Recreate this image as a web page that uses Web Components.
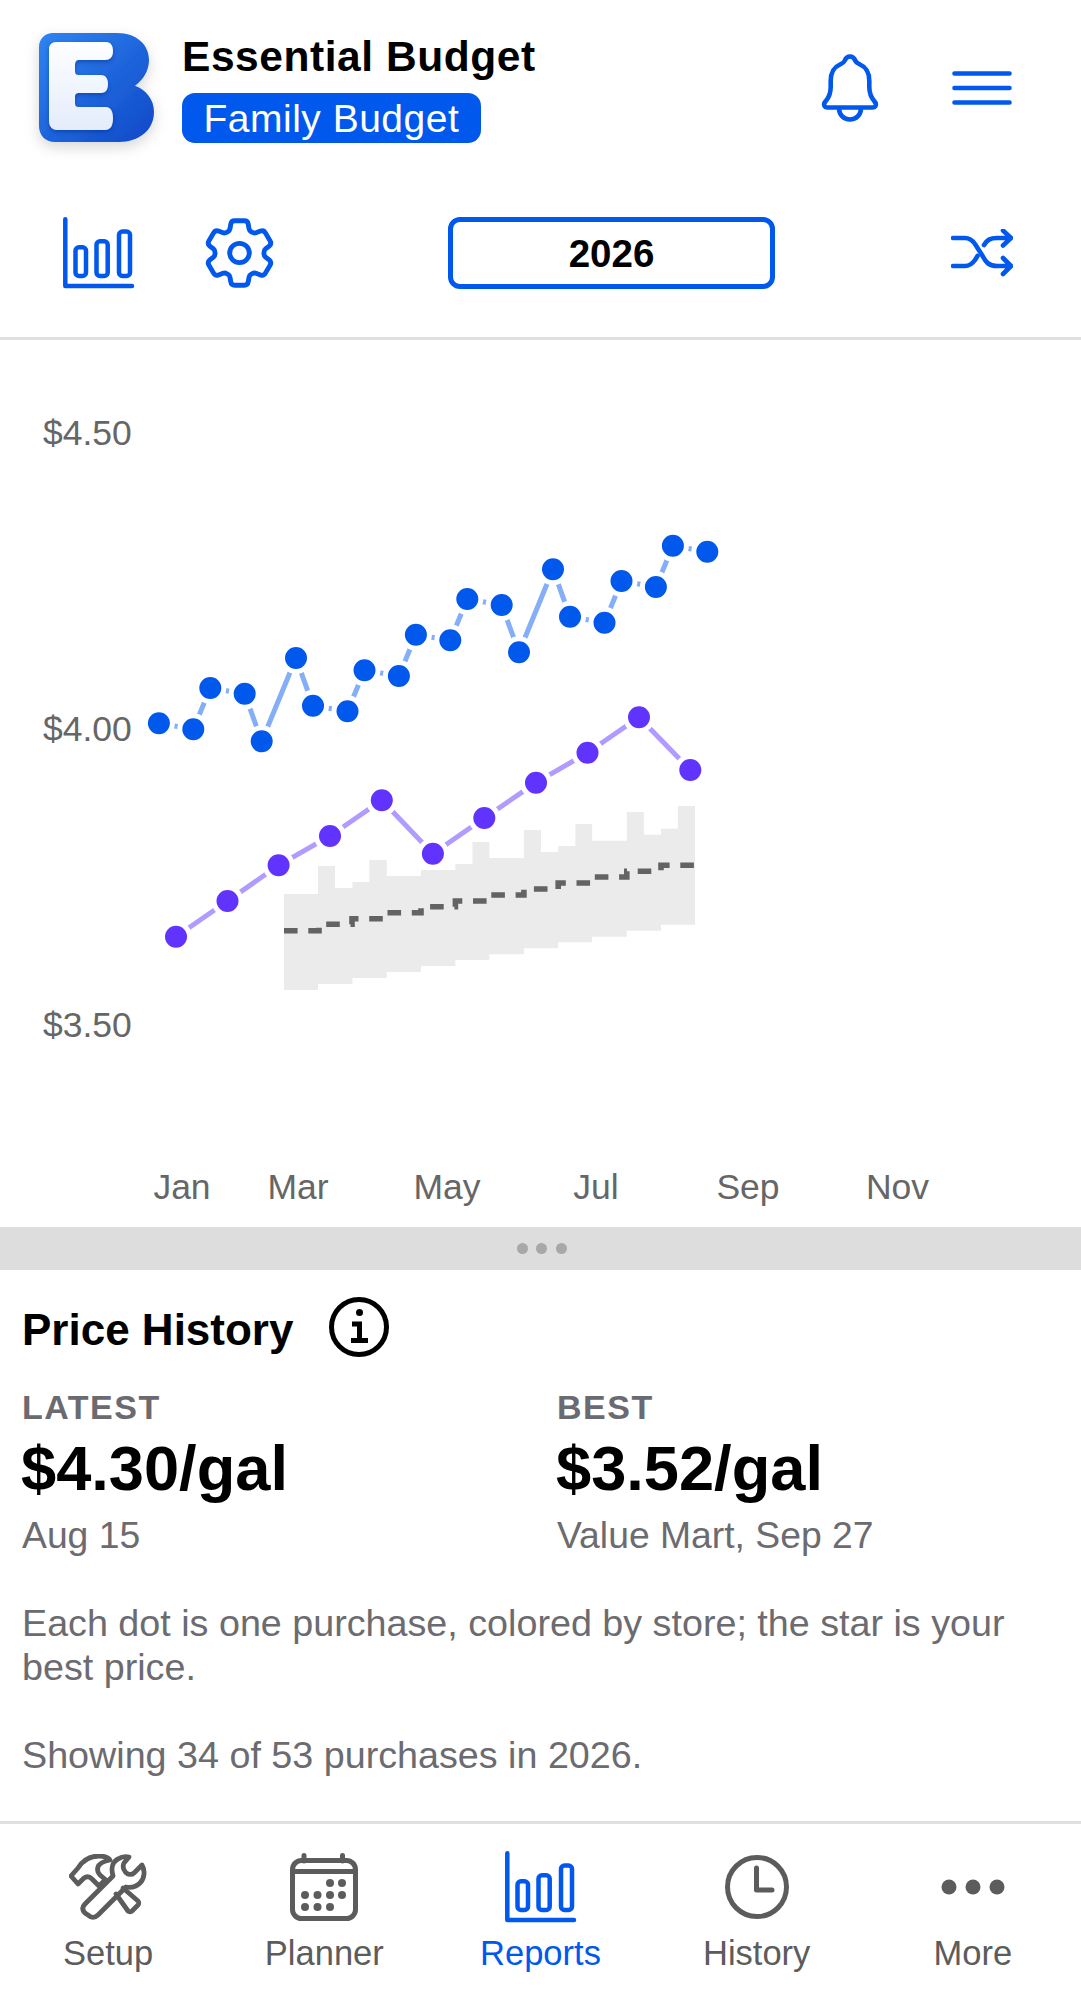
<!DOCTYPE html>
<html lang="en">
<head>
<meta charset="utf-8">
<title>Essential Budget</title>
<style>
  html, body { margin: 0; background: #fff; }
  body { font-family: "Liberation Sans", Arial, sans-serif; width: 1081px; height: 1999px; overflow: hidden; }
</style>
</head>
<body>
<eb-app></eb-app>
<script>
const BLUE = '#0058ec';
const GREY = '#5c5c5c';

const ICONS = {
  logo: `<svg width="150" height="145" viewBox="-17 -15 150 145" style="display:block">
      <defs>
        <linearGradient id="lb" x1="0" y1="0" x2="1" y2="1"><stop offset="0" stop-color="#2f84f2"/><stop offset="1" stop-color="#0f47c6"/></linearGradient>
        <linearGradient id="lw" x1="0" y1="0" x2="0" y2="1"><stop offset="0" stop-color="#fdfeff"/><stop offset="1" stop-color="#e4ecfb"/></linearGradient>
        <filter id="ls" x="-30%" y="-30%" width="160%" height="160%"><feDropShadow dx="0" dy="5" stdDeviation="7" flood-color="#000" flood-opacity=".16"/></filter>
        <filter id="le" x="-20%" y="-20%" width="140%" height="140%"><feDropShadow dx="0" dy="2" stdDeviation="2" flood-color="#06308f" flood-opacity=".55"/></filter>
      </defs>
      <path filter="url(#ls)" fill="url(#lb)" d="M14 0H78C98 0 110 12 110 27C110 38 104 47 96 52.7C107 57 115 66 115 79C115 97 100 109 80 109H16C6 109 0 102 0 93V14C0 6 6 0 14 0Z"/>
      <path filter="url(#le)" fill="url(#lw)" d="M17 9H67C72 9 74 13 74 18C74 24 71 27 66 27H40C37 27 36 29 36 32V38C36 41 37 42 40 42H62C67 42 69 46 69 51C69 56 67 60 62 60H40C37 60 36 61 36 64V70C36 73 37 74 40 74H67C72 74 74 79 74 85C74 92 72 97 66 97H18C13 97 10 93 10 88V16C10 12 13 9 17 9Z"/>
    </svg>`,
  bell: `<svg width="58" height="68" viewBox="0 0 58 68" fill="none" stroke="${BLUE}" stroke-width="4.600" style="display:block">
      <path stroke-linejoin="round" d="M29 2.500C26 2.500 24.500 4.500 23.500 7C22.800 8.700 21 9.500 19 10.500C13 13 9.700 19 9.700 27V33C9.700 40 7.500 44 4.500 47.500C2 50 3 53.500 7 53.500H51C55 53.500 56 50 53.500 47.500C50.500 44 48.300 40 48.300 33V27C48.300 19 45 13 39 10.500C37 9.500 35.200 8.700 34.500 7C33.500 4.500 32 2.500 29 2.500Z"/>
      <path d="M18 54C18 61 23 65.500 29 65.500S40 61 40 54"/>
    </svg>`,
  menu: `<svg width="60" height="40" viewBox="0 0 60 40" fill="none" stroke="${BLUE}" stroke-width="4.600" stroke-linecap="round" style="display:block">
      <path d="M2.500 5.500H57.500M2.500 20H57.500M2.500 34.500H57.500"/>
    </svg>`,
  bars: `<svg width="72" height="72" viewBox="0 0 72 72" fill="none" stroke="currentColor" stroke-width="4.500" stroke-linecap="round" stroke-linejoin="round" style="display:block">
      <path d="M2.300 2.300V69H69"/>
      <rect x="12.500" y="30.200" width="10.500" height="28.800" rx="3.500"/>
      <rect x="33.500" y="24.200" width="11.200" height="34.800" rx="3.500"/>
      <rect x="56" y="14.500" width="11" height="44.500" rx="3.500"/>
    </svg>`,
  gear: `<svg width="87" height="86" viewBox="0 0 24 24" preserveAspectRatio="none" fill="none" stroke="${BLUE}" stroke-width="1.350" stroke-linejoin="round" style="display:block">
      <path d="M9.594 3.94c.09-.542.56-.94 1.11-.94h2.593c.55 0 1.02.398 1.11.94l.213 1.281c.063.374.313.686.645.87.074.04.147.083.22.127.325.196.72.257 1.075.124l1.217-.456a1.125 1.125 0 0 1 1.37.49l1.296 2.247a1.125 1.125 0 0 1-.26 1.431l-1.003.827c-.293.241-.438.613-.43.992a7.723 7.723 0 0 1 0 .255c-.008.378.137.75.43.991l1.004.827c.424.35.534.955.26 1.43l-1.298 2.247a1.125 1.125 0 0 1-1.369.491l-1.217-.456c-.355-.133-.75-.072-1.076.124a6.47 6.47 0 0 1-.22.128c-.331.183-.581.495-.644.869l-.213 1.281c-.09.543-.56.94-1.11.94h-2.594c-.55 0-1.019-.398-1.11-.94l-.213-1.281c-.062-.374-.312-.686-.644-.87a6.52 6.52 0 0 1-.22-.127c-.325-.196-.72-.257-1.076-.124l-1.217.456a1.125 1.125 0 0 1-1.369-.49l-1.297-2.247a1.125 1.125 0 0 1 .26-1.431l1.004-.827c.292-.24.437-.613.43-.991a6.932 6.932 0 0 1 0-.255c.007-.38-.138-.751-.43-.992l-1.004-.827a1.125 1.125 0 0 1-.26-1.43l1.297-2.247a1.125 1.125 0 0 1 1.37-.491l1.216.456c.356.133.751.072 1.076-.124.072-.044.146-.086.22-.128.332-.183.582-.495.644-.869l.214-1.28Z"/>
      <path d="M14.700 12a2.700 2.700 0 1 1-5.400 0 2.700 2.700 0 0 1 5.400 0Z"/>
    </svg>`,
  shuffle: `<svg width="62" height="48" viewBox="0 0 62 48" fill="none" stroke="${BLUE}" stroke-width="4.600" stroke-linecap="round" stroke-linejoin="round" style="display:block">
      <path d="M2 9H14C19 9 21.500 11.500 24 15L31 26C34 31 36 37 46 37H60M52 29L60 37L52 45"/>
      <path d="M2 37H14C19 37 21.500 34.500 24 31L26.500 27M33 16C36 11 39 9 46 9H60M52 1.500L60 9L52 16.500"/>
    </svg>`,
  info: `<svg width="60" height="60" viewBox="0 0 60 60" fill="none" stroke="#000" stroke-width="5" style="display:block">
      <circle cx="30" cy="30" r="27.500"/>
      <path d="M23 27H30.500V43M22 43.500H39"/>
      <circle cx="30.500" cy="15.500" r="3.500" fill="#000" stroke="none"/>
    </svg>`,
  tools: `<svg width="78" height="66" viewBox="0 0 78 66" fill="none" stroke="${GREY}" stroke-width="4.800" stroke-linejoin="round" stroke-linecap="round" style="display:block">
      <path d="M16 50L44 22C42 15 43 8 49 5C52 3 56 2 60 3L55 9C53 13 55 18 59 20C62 21 64 20 65 19L73 11C76 16 76 24 71 29C67 33 62 34 57 33L29 61C26 64 22 64 19 61L16 59C13 56 13 53 16 50Z"/>
      <path d="M47 40L59 57C60 58 62 58 63 57L69 51C70 50 70 48 69 47L54 34"/>
      <path d="M38 27L31 21C29 19 28 16 29 13C30 9 36 7 41 6C39 3 35 2 30 2C22 2 14 6 9 14L2 22L9 30L15 24C18 22 21 23 23 25L30 32L34 28"/>
    </svg>`,
  calendar: `<svg width="68" height="68" viewBox="0 0 68 68" fill="none" stroke="${GREY}" stroke-width="5" stroke-linecap="round" style="display:block">
      <rect x="2.500" y="7.500" width="63" height="58" rx="9"/>
      <path d="M14 2.500V8M52.500 2.500V8M2.500 18.500H65.500"/>
      <g fill="${GREY}" stroke="none">
        <circle cx="40" cy="30" r="4"/><circle cx="52" cy="30" r="4"/>
        <circle cx="15" cy="42" r="4"/><circle cx="27.500" cy="42" r="4"/><circle cx="40" cy="42" r="4"/><circle cx="52" cy="42" r="4"/>
        <circle cx="15" cy="54" r="4"/><circle cx="27.500" cy="54" r="4"/><circle cx="40" cy="54" r="4"/>
      </g>
    </svg>`,
  clock: `<svg width="64" height="64" viewBox="0 0 64 64" fill="none" stroke="${GREY}" stroke-width="5" stroke-linecap="round" stroke-linejoin="round" style="display:block">
      <circle cx="32" cy="32" r="29.500"/>
      <path d="M31.500 13V35H47"/>
    </svg>`,
  dots: `<svg width="64" height="16" viewBox="0 0 64 16" fill="${GREY}" style="display:block">
      <circle cx="8" cy="8" r="7.500"/><circle cx="32" cy="8" r="7.500"/><circle cx="56" cy="8" r="7.500"/>
    </svg>`
};

class EbIcon extends HTMLElement {
  constructor() {
    super();
    this.attachShadow({mode: 'open'});
  }
  connectedCallback() {
    this.shadowRoot.innerHTML = `<style>:host{display:block;line-height:0}</style>${ICONS[this.getAttribute('name')]}`;
  }
}
customElements.define('eb-icon', EbIcon);

class EbHeader extends HTMLElement {
  constructor() {
    super();
    this.attachShadow({mode: 'open'});
    this.shadowRoot.innerHTML = `
      <style>
        :host { display: flex; height: 166px; box-sizing: border-box; align-items: flex-start; }
        .logo { margin: 18px 0 0 22px; }
        .names { margin: 31px 0 0 10px; flex: 1; }
        h1 { margin: 0; font-size: 42.500px; line-height: 52px; font-weight: 700; color: #000; letter-spacing: .55px; }
        .badge { display: inline-block; margin-top: 10px; background: ${BLUE}; color: #fff; border-radius: 13px; font-size: 39px; line-height: 49px; padding: 1px 21.500px 0; letter-spacing: .5px; }
        .bell { margin: 54px 73px 0 0; }
        .menu { margin: 68px 69.500px 0 0; }
      </style>
      <eb-icon class="logo" name="logo"></eb-icon>
      <div class="names">
        <h1>Essential Budget</h1>
        <div class="badge">Family Budget</div>
      </div>
      <eb-icon class="bell" name="bell"></eb-icon>
      <eb-icon class="menu" name="menu"></eb-icon>`;
  }
}
customElements.define('eb-header', EbHeader);

class EbToolbar extends HTMLElement {
  constructor() {
    super();
    this.attachShadow({mode: 'open'});
    this.shadowRoot.innerHTML = `
      <style>
        :host { display: flex; height: 174px; box-sizing: border-box; border-bottom: 3px solid #e0e0e0; padding: 51px 68px 0 63px; align-items: flex-start; color: ${BLUE}; }
        .gear { margin: -7px 0 0 61px; }
        .year { box-sizing: border-box; width: 327px; height: 72px; margin-left: 165px; padding-top: 2px; border: 5px solid ${BLUE}; border-radius: 12px; color: #000; font-size: 38.500px; font-weight: 700; display: flex; align-items: center; justify-content: center; }
        .shuffle { margin: 12px 0 0 auto; }
      </style>
      <eb-icon name="bars"></eb-icon>
      <eb-icon class="gear" name="gear"></eb-icon>
      <div class="year">2026</div>
      <eb-icon class="shuffle" name="shuffle"></eb-icon>`;
  }
}
customElements.define('eb-toolbar', EbToolbar);

const BLUE_PTS = [[158.9,723.3],[193.3,729.3],[210.3,688],[244.7,693.7],[261.7,741.3],[296,658],[313,705.7],[347.5,711.3],[364.5,670.3],[398.9,676],[415.9,634.7],[450.3,640.3],[467.3,599],[501.7,605],[519,652.3],[553,569.3],[570,616.7],[604.5,622.7],[621.5,581],[655.9,587],[672.9,545.7],[707.3,551.7]];
const PURPLE_PTS = [[176,936.7],[227.5,901],[278.6,865.3],[330,836],[381.8,800.3],[432.9,853.7],[484.3,818],[536,782.7],[587.5,752.7],[639,717.3],[690.3,770]];
// band edges are half month steps
const BAND_TOP = [[284,894],[318,866],[335,888],[352.5,882],[369.3,860],[386.8,876],[421,870],[455.4,864],[472.5,842],[489.3,858],[523.9,830],[541,852],[558.2,846],[575.4,824],[592.1,840.7],[626.8,812],[643.9,834.7],[661,828.7],[677.9,806]];
const BAND_BOTTOM = [[284,990],[318,984],[352.5,978],[386.8,972],[421,966],[455.4,960],[489.3,954.3],[523.9,948.3],[558.2,942.3],[592.1,936.7],[626.8,930.7],[661,924.7]];
const MEDIAN = [[284,930.7],[319,924.3],[352,918.7],[386.8,912.7],[421,906.7],[455.4,901],[489.3,895],[523.9,889],[558.2,883],[592.1,877],[626.8,871.3],[661,865.3]];
const RIGHT = 695;

class EbChart extends HTMLElement {
  constructor() {
    super();
    this.attachShadow({mode: 'open'});
  }
  series(pts, line, dot) {
    const d = pts.map((p, i) => (i ? 'L' : 'M') + p[0] + ' ' + p[1]).join('');
    const dots = pts.map(p => `<circle cx="${p[0]}" cy="${p[1]}" r="13.5" fill="${dot}" stroke="#fff" stroke-width="5"/>`).join('');
    return `<path d="${d}" fill="none" stroke="${line}" stroke-width="5"/>${dots}`;
  }
  connectedCallback() {
    let band = '';
    BAND_TOP.forEach((p, i) => { band += `${i ? 'V' + p[1] : 'M' + p[0] + ' ' + p[1]}H${(BAND_TOP[i + 1] || [RIGHT])[0]}`; });
    BAND_BOTTOM.slice().reverse().forEach(p => { band += `V${p[1]}H${p[0]}`; });
    band += 'Z';
    let med = '';
    MEDIAN.forEach((p, i) => { med += `${i ? 'V' + p[1] : 'M' + p[0] + ' ' + p[1]}H${(MEDIAN[i + 1] || [RIGHT])[0]}`; });
    const yLabels = [['$4.50', 444.5], ['$4.00', 740.5], ['$3.50', 1036.5]];
    const xLabels = [['Jan', 182], ['Mar', 298], ['May', 447], ['Jul', 596], ['Sep', 748], ['Nov', 897.5]];
    this.shadowRoot.innerHTML = `
      <style>
        :host { display: block; height: 887px; }
        svg { display: block; }
        text { font-family: "Liberation Sans", Arial, sans-serif; font-size: 35.500px; fill: #666; }
      </style>
      <svg width="1081" height="887" viewBox="0 340 1081 887">
        <path d="${band}" fill="#ebebeb"/>
        <path d="${med}" fill="none" stroke="#636366" stroke-width="5.600" stroke-dasharray="13.600 10.700"/>
        ${this.series(BLUE_PTS, '#85aef8', BLUE)}
        ${this.series(PURPLE_PTS, '#b29bff', '#6133ff')}
        ${yLabels.map(l => `<text x="43" y="${l[1]}">${l[0]}</text>`).join('')}
        ${xLabels.map(l => `<text x="${l[1]}" y="1198.500" text-anchor="middle">${l[0]}</text>`).join('')}
      </svg>`;
  }
}
customElements.define('eb-chart', EbChart);

class EbHandle extends HTMLElement {
  constructor() {
    super();
    this.attachShadow({mode: 'open'});
    this.shadowRoot.innerHTML = `
      <style>
        :host { display: flex; height: 43px; background: #ddd; align-items: center; justify-content: center; gap: 8.500px; padding-left: 2px; }
        i { width: 11px; height: 11px; border-radius: 50%; background: #a8a8a8; }
      </style>
      <i></i><i></i><i></i>`;
  }
}
customElements.define('eb-handle', EbHandle);

class EbStat extends HTMLElement {
  constructor() {
    super();
    this.attachShadow({mode: 'open'});
  }
  connectedCallback() {
    this.shadowRoot.innerHTML = `
      <style>
        :host { display: block; }
        .label { font-size: 34px; line-height: 40px; font-weight: 700; color: #6a6a70; letter-spacing: 1.500px; }
        .value { font-size: 63.200px; line-height: 72px; font-weight: 700; color: #000; margin: 5px 0 0 -1px; }
        .note { font-size: 37.300px; line-height: 44px; color: #6b6b70; margin-top: 9px; }
      </style>
      <div class="label">${this.getAttribute('label')}</div>
      <div class="value">${this.getAttribute('value')}</div>
      <div class="note">${this.getAttribute('note')}</div>`;
  }
}
customElements.define('eb-stat', EbStat);

class EbDetails extends HTMLElement {
  constructor() {
    super();
    this.attachShadow({mode: 'open'});
    this.shadowRoot.innerHTML = `
      <style>
        :host { display: block; height: 551px; box-sizing: border-box; padding: 27px 22px 0; }
        .head { display: flex; align-items: center; gap: 36px; height: 60px; }
        h2 { margin: 0; font-size: 44px; line-height: 50px; font-weight: 700; color: #000; padding-top: 5px; }
        .stats { display: grid; grid-template-columns: 535px 1fr; margin-top: 30px; }
        p { margin: 0; font-size: 37.700px; line-height: 44px; color: #6b6b70; }
        .first { margin-top: 43.500px; }
        .last { margin-top: 44px; }
      </style>
      <div class="head"><h2>Price History</h2><eb-icon name="info"></eb-icon></div>
      <div class="stats">
        <eb-stat label="LATEST" value="$4.30/gal" note="Aug 15"></eb-stat>
        <eb-stat label="BEST" value="$3.52/gal" note="Value Mart, Sep 27"></eb-stat>
      </div>
      <p class="first">Each dot is one purchase, colored by store; the star is your best price.</p>
      <p class="last">Showing 34 of 53 purchases in 2026.</p>`;
  }
}
customElements.define('eb-details', EbDetails);

class EbTab extends HTMLElement {
  constructor() {
    super();
    this.attachShadow({mode: 'open'});
  }
  connectedCallback() {
    this.shadowRoot.innerHTML = `
      <style>
        :host { display: flex; flex-direction: column; align-items: center; color: ${GREY}; }
        :host([active]) { color: ${BLUE}; }
        .ico { height: 72px; display: flex; align-items: center; justify-content: center; }
        :host([active]) .ico { padding-left: 2px; }
        .txt { font-size: 34.500px; line-height: 40px; margin-top: 10px; }
      </style>
      <div class="ico"><slot></slot></div>
      <div class="txt">${this.getAttribute('label')}</div>`;
  }
}
customElements.define('eb-tab', EbTab);

class EbTabbar extends HTMLElement {
  constructor() {
    super();
    this.attachShadow({mode: 'open'});
    this.shadowRoot.innerHTML = `
      <style>
        :host { display: grid; grid-template-columns: repeat(5, 1fr); height: 178px; box-sizing: border-box; border-top: 3px solid #e0e0e0; padding-top: 27px; }
      </style>
      <slot></slot>`;
  }
}
customElements.define('eb-tabbar', EbTabbar);

class EbApp extends HTMLElement {
  constructor() {
    super();
    this.attachShadow({mode: 'open'});
    this.shadowRoot.innerHTML = `
      <style>:host { display: block; width: 1081px; height: 1999px; background: #fff; }</style>
      <eb-header></eb-header>
      <eb-toolbar></eb-toolbar>
      <eb-chart></eb-chart>
      <eb-handle></eb-handle>
      <eb-details></eb-details>
      <eb-tabbar>
        <eb-tab label="Setup"><eb-icon name="tools"></eb-icon></eb-tab>
        <eb-tab label="Planner"><eb-icon name="calendar"></eb-icon></eb-tab>
        <eb-tab label="Reports" active><eb-icon name="bars"></eb-icon></eb-tab>
        <eb-tab label="History"><eb-icon name="clock"></eb-icon></eb-tab>
        <eb-tab label="More"><eb-icon name="dots"></eb-icon></eb-tab>
      </eb-tabbar>`;
  }
}
customElements.define('eb-app', EbApp);
</script>
</body>
</html>
